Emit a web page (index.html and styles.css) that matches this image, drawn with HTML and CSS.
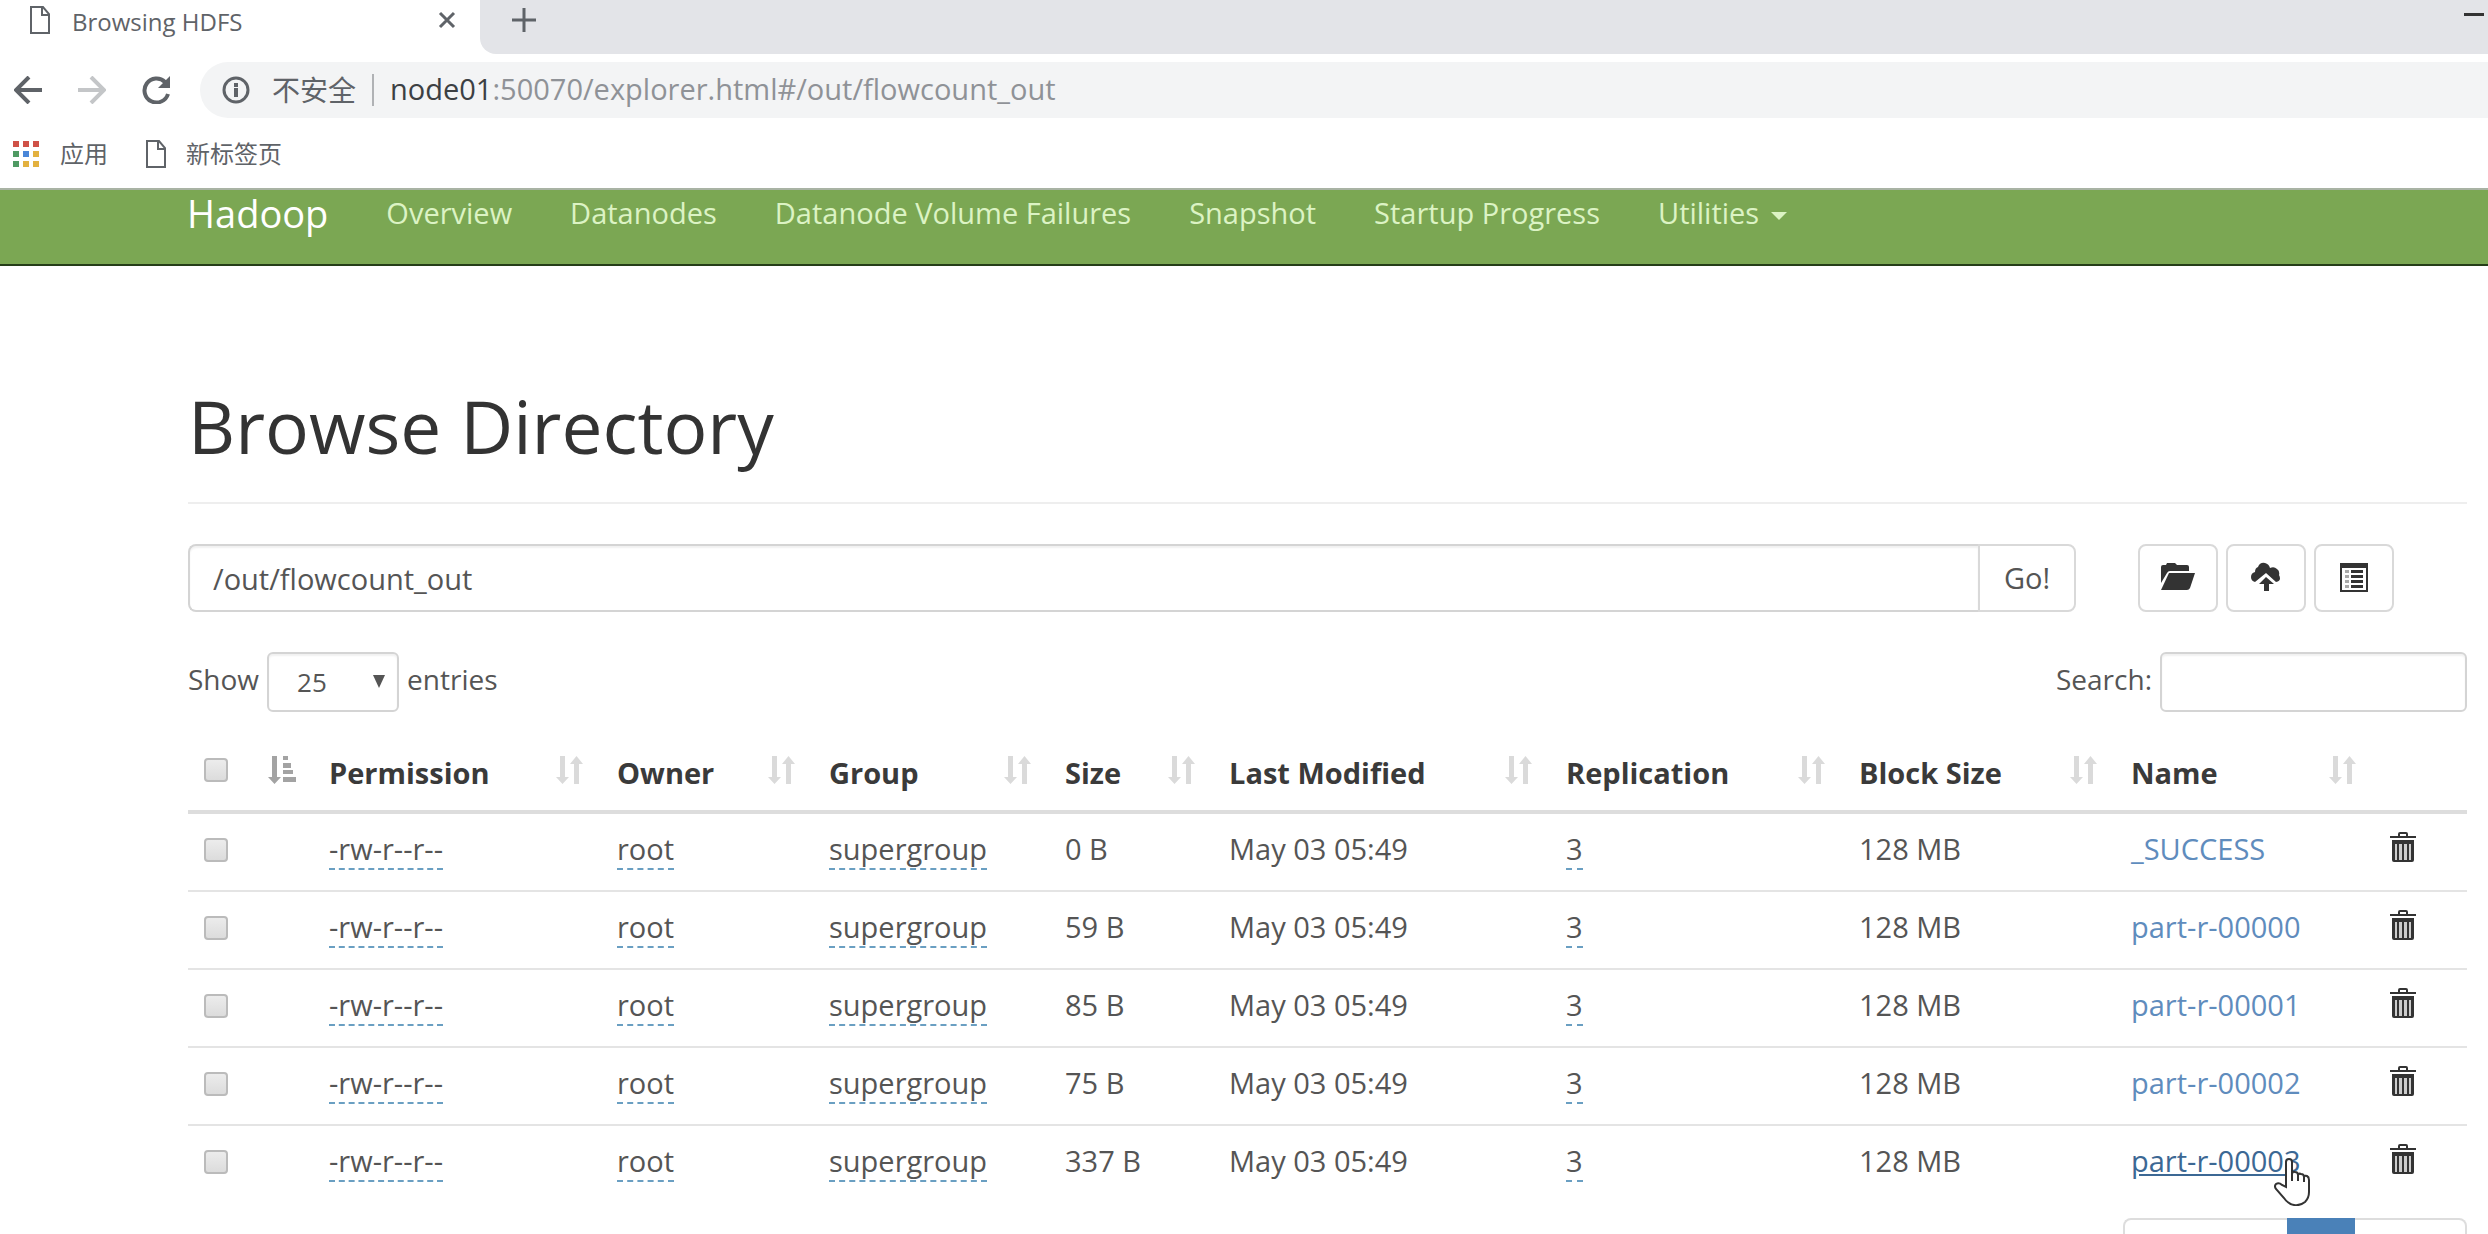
FILE: index.html
```html
<!DOCTYPE html>
<html lang="en">
<head>
  <meta charset="UTF-8">
  <title>Browsing HDFS</title>
  <link rel="stylesheet" href="styles.css">
</head>
<body>
  <!-- shared icons -->
  <svg class="sprite" aria-hidden="true">
    <symbol id="icon-page" viewBox="0 0 20 28">
      <path d="M1 1h12l6 7v19H1z M12 1v8h7" fill="none" stroke="currentColor" stroke-width="2"/>
    </symbol>
    <symbol id="icon-sort" viewBox="0 0 28 28">
      <path d="M4 0h5v21h4l-6.500 7L0 21h4z M18 28V8h-4L20.500 0 27 8h-4v20z" fill="currentColor"/>
    </symbol>
    <symbol id="icon-sort-asc" viewBox="0 0 28 28">
      <path d="M4 0h5v21h4l-6.500 7L0 21h4z M15 0h5v4h-5z M15 7h8v5h-8z M15 14h10v4h-10z M15 21h13v5h-13z" fill="currentColor"/>
    </symbol>
    <symbol id="icon-trash" viewBox="0 0 26 31">
      <path d="M8 4V2q0-2 2-2h6q2 0 2 2v2h8v2H0V4z M10 4h6V2h-6z M2 8h22v20q0 2-2 2H4q-2 0-2-2z" fill="#333" fill-rule="evenodd"/>
      <path d="M5 12h2v16H5z M9 12h3v16H9z M14 12h3v16h-3z M19 12h2v16h-2z" fill="#ccc"/>
    </symbol>
  </svg>

  <div class="browser">
    <div class="tab-strip">
      <div class="tab">
        <svg class="page-icon"><use href="#icon-page"/></svg>
        <span class="tab-title">Browsing HDFS</span>
        <button class="tab-close" aria-label="Close tab">
          <svg width="18" height="18" viewBox="0 0 18 18"><path d="M2 2l14 14M16 2L2 16" stroke="#5f6368" stroke-width="3"/></svg>
        </button>
      </div>
      <div class="tab-rest">
        <button aria-label="New tab">
          <svg width="24" height="24" viewBox="0 0 24 24"><path d="M12 0v24M0 12h24" stroke="#5f6368" stroke-width="3"/></svg>
        </button>
        <button aria-label="Minimize">
          <svg width="20" height="4" viewBox="0 0 20 4"><path d="M0 0h20v3H0z" fill="#333"/></svg>
        </button>
      </div>
    </div>

    <div class="toolbar">
      <button aria-label="Back">
        <svg width="28" height="28" viewBox="0 0 28 28"><path d="M28 14H3M15 1L2 14l13 13" fill="none" stroke="#5f6368" stroke-width="4"/></svg>
      </button>
      <button aria-label="Forward">
        <svg width="28" height="28" viewBox="0 0 28 28"><path d="M0 14h25M13 1l13 13-13 13" fill="none" stroke="#c4c6c8" stroke-width="4"/></svg>
      </button>
      <button aria-label="Reload">
        <svg width="28" height="28" viewBox="0 0 28 28"><path d="M23 6A12 12 0 1 0 26 18" fill="none" stroke="#5f6368" stroke-width="4"/><path d="M28 0v12H16z" fill="#5f6368"/></svg>
      </button>
      <div class="address">
        <svg width="28" height="28" viewBox="0 0 28 28"><circle cx="14" cy="14" r="12" fill="none" stroke="#5f6368" stroke-width="3"/><path d="M12 7h4v4h-4z M12 12h4v9h-4z" fill="#5f6368"/></svg>
        <span class="insecure">不安全</span>
        <span class="url"><b>node01</b>:50070/explorer.html#/out/flowcount_out</span>
      </div>
    </div>

    <div class="bookmarks">
      <a href="#apps">
        <svg width="27" height="27" viewBox="0 0 27 27">
          <path d="M0 0h6v6H0z M10 0h6v6h-6z M20 0h6v6h-6z" fill="#cf5147"/>
          <path d="M0 10h6v6H0z M0 20h6v6H0z" fill="#4f9a63"/>
          <path d="M10 10h6v6h-6z" fill="#4a86d8"/>
          <path d="M20 10h6v6h-6z M10 20h6v6h-6z M20 20h6v6h-6z" fill="#e3b13f"/>
        </svg>
        应用
      </a>
      <a href="#newtab"><svg class="page-icon"><use href="#icon-page"/></svg>新标签页</a>
    </div>
  </div>

  <nav class="navbar">
    <a class="brand" href="#hadoop">Hadoop</a>
    <a href="#overview">Overview</a>
    <a href="#datanodes">Datanodes</a>
    <a href="#failures">Datanode Volume Failures</a>
    <a href="#snapshot">Snapshot</a>
    <a href="#startup">Startup Progress</a>
    <a href="#utilities">Utilities <span class="caret"></span></a>
  </nav>

  <main class="container">
    <h1>Browse Directory</h1>

    <div class="path-row">
      <form class="path-form">
        <input type="text" value="/out/flowcount_out" aria-label="Directory">
        <button type="button">Go!</button>
      </form>
      <div class="actions">
        <button aria-label="Create directory">
          <svg width="36" height="28" viewBox="0 0 36 28"><path d="M1 20V4q0-2 2-2h3l1-2h8l2 2h10q2 0 2 2v4H10q-2 0-3 2z" fill="#333"/><path d="M9 10h26L30 25q-1 2-3 2H1z" fill="#333"/></svg>
        </button>
        <button aria-label="Upload files">
          <svg width="30" height="30" viewBox="0 0 30 30"><path d="M4 20q-4-1-4-5 0-4 4-5 0-4 3-5 2-5 7-4 4 1 5 5 4-2 7 1 3 2 2 6 3 6-3 7l-10-9z" fill="#333"/><path d="M15 15l8 7h-5v7h-5v-7H8z" fill="#333"/></svg>
        </button>
        <button aria-label="Cut and paste">
          <svg width="28" height="29" viewBox="0 0 28 29"><path d="M0 0h28v29H0z M2 5v22h24V5z" fill="#333" fill-rule="evenodd"/><path d="M5 7h4v3H5z M5 12h4v3H5z M5 17h4v3H5z M5 22h4v3H5z" fill="#aaa"/><path d="M11 7h12v3H11z M11 12h12v3H11z M11 17h12v3H11z M11 22h12v3H11z" fill="#333"/></svg>
        </button>
      </div>
    </div>

    <div class="filter-row">
      <label class="length">Show
        <span class="select-wrap">
          <select><option>10</option><option selected>25</option><option>50</option></select>
        </span>
        entries
      </label>
      <label class="search">Search: <input type="search"></label>
    </div>

    <table>
      <colgroup>
        <col class="c-check"><col class="c-perm"><col class="c-owner"><col class="c-group"><col class="c-size">
        <col class="c-date"><col class="c-repl"><col class="c-block"><col class="c-name"><col class="c-trash">
      </colgroup>
      <thead>
        <tr>
          <th><div class="head"><input type="checkbox" aria-label="Select all"><svg class="sort sorted"><use href="#icon-sort-asc"/></svg></div></th>
          <th><div class="head">Permission<svg class="sort"><use href="#icon-sort"/></svg></div></th>
          <th><div class="head">Owner<svg class="sort"><use href="#icon-sort"/></svg></div></th>
          <th><div class="head">Group<svg class="sort"><use href="#icon-sort"/></svg></div></th>
          <th><div class="head">Size<svg class="sort"><use href="#icon-sort"/></svg></div></th>
          <th><div class="head">Last Modified<svg class="sort"><use href="#icon-sort"/></svg></div></th>
          <th><div class="head">Replication<svg class="sort"><use href="#icon-sort"/></svg></div></th>
          <th><div class="head">Block Size<svg class="sort"><use href="#icon-sort"/></svg></div></th>
          <th><div class="head">Name<svg class="sort"><use href="#icon-sort"/></svg></div></th>
          <th></th>
        </tr>
      </thead>
      <tbody>
        <tr>
          <td><input type="checkbox" aria-label="Select _SUCCESS"></td>
          <td><span class="editable">-rw-r--r--</span></td>
          <td><span class="editable">root</span></td>
          <td><span class="editable">supergroup</span></td>
          <td>0 B</td>
          <td>May 03 05:49</td>
          <td><span class="editable">3</span></td>
          <td>128 MB</td>
          <td><a href="#_SUCCESS">_SUCCESS</a></td>
          <td><button class="trash" aria-label="Delete _SUCCESS"><svg><use href="#icon-trash"/></svg></button></td>
        </tr>
        <tr>
          <td><input type="checkbox" aria-label="Select part-r-00000"></td>
          <td><span class="editable">-rw-r--r--</span></td>
          <td><span class="editable">root</span></td>
          <td><span class="editable">supergroup</span></td>
          <td>59 B</td>
          <td>May 03 05:49</td>
          <td><span class="editable">3</span></td>
          <td>128 MB</td>
          <td><a href="#part-r-00000">part-r-00000</a></td>
          <td><button class="trash" aria-label="Delete part-r-00000"><svg><use href="#icon-trash"/></svg></button></td>
        </tr>
        <tr>
          <td><input type="checkbox" aria-label="Select part-r-00001"></td>
          <td><span class="editable">-rw-r--r--</span></td>
          <td><span class="editable">root</span></td>
          <td><span class="editable">supergroup</span></td>
          <td>85 B</td>
          <td>May 03 05:49</td>
          <td><span class="editable">3</span></td>
          <td>128 MB</td>
          <td><a href="#part-r-00001">part-r-00001</a></td>
          <td><button class="trash" aria-label="Delete part-r-00001"><svg><use href="#icon-trash"/></svg></button></td>
        </tr>
        <tr>
          <td><input type="checkbox" aria-label="Select part-r-00002"></td>
          <td><span class="editable">-rw-r--r--</span></td>
          <td><span class="editable">root</span></td>
          <td><span class="editable">supergroup</span></td>
          <td>75 B</td>
          <td>May 03 05:49</td>
          <td><span class="editable">3</span></td>
          <td>128 MB</td>
          <td><a href="#part-r-00002">part-r-00002</a></td>
          <td><button class="trash" aria-label="Delete part-r-00002"><svg><use href="#icon-trash"/></svg></button></td>
        </tr>
        <tr>
          <td><input type="checkbox" aria-label="Select part-r-00003"></td>
          <td><span class="editable">-rw-r--r--</span></td>
          <td><span class="editable">root</span></td>
          <td><span class="editable">supergroup</span></td>
          <td>337 B</td>
          <td>May 03 05:49</td>
          <td><span class="editable">3</span></td>
          <td>128 MB</td>
          <td>
            <a class="hovered" href="#part-r-00003">part-r-00003<svg class="pointer" viewBox="0 0 36 48"><path d="M12 29V4q0-3 3-3t3 3v12q1-3 3-2 3 0 3 3 1-2 3-1 3 0 3 3 1-2 3-1 2 1 2 4v12q0 6-4 10-5 4-11 3-6-1-10-7L2 31q-2-3 0-5 3-2 6 1z" fill="#fff" stroke="#333" stroke-width="2"/><path d="M18 15v8M24 16v7M30 18v6" stroke="#333" stroke-width="2"/></svg></a>
          </td>
          <td><button class="trash" aria-label="Delete part-r-00003"><svg><use href="#icon-trash"/></svg></button></td>
        </tr>
      </tbody>
    </table>

    <div class="pagination">
      <a class="previous" href="#prev" aria-label="Previous"></a>
      <a class="active" href="#1" aria-label="Page 1"></a>
      <a class="next" href="#next" aria-label="Next"></a>
    </div>
  </main>
</body>
</html>
```
FILE: styles.css
```css
* {
  box-sizing: border-box;
}

body {
  margin: 0;
  height: 100vh;
  overflow: hidden;
  font-family: "Open Sans", "Noto Sans CJK SC", sans-serif;
  font-size: 29px;
  line-height: 42px;
  color: #555;
  background: #fff;
}

button, input, select {
  font: inherit;
  color: inherit;
}

button {
  padding: 0;
  border: none;
  background: none;
}

a {
  color: #5f8cbd;
  text-decoration: none;
}

svg {
  flex: none;
}

.sprite {
  position: absolute;
  width: 0;
  height: 0;
}

/* browser window */
.browser {
  color: #5f6368;
  border-bottom: 2px solid #a9b3a4;
}

.tab-strip {
  display: flex;
  height: 54px;
  background: #fff;
}

.tab {
  display: flex;
  align-items: center;
  width: 480px;
  padding: 0 24px 14px 30px;
  font-size: 24px;
}

.page-icon {
  width: 20px;
  height: 28px;
  color: #5f6368;
}

.tab-title {
  flex: 1;
  margin-left: 22px;
  padding-top: 4px;
}

.tab-close svg, .tab-rest svg, .toolbar svg {
  display: block;
}

.tab-rest {
  flex: 1;
  display: flex;
  justify-content: space-between;
  align-items: flex-start;
  padding: 8px 4px 0 32px;
  background: #e3e4e8;
  border-bottom-left-radius: 16px;
}

.tab-rest button:last-child {
  padding-top: 5px;
}

.toolbar {
  display: flex;
  align-items: center;
  gap: 36px;
  padding: 8px 0 8px 14px;
}

.address {
  flex: 1;
  display: flex;
  align-items: center;
  height: 56px;
  margin-left: -6px;
  padding-left: 22px;
  background: #f3f4f5;
  border-radius: 28px 0 0 28px;
}

.insecure {
  margin-left: 22px;
  padding-right: 16px;
  font-size: 28px;
  line-height: 32px;
  border-right: 2px solid #b0b2b5;
}

.url {
  margin-left: 16px;
  padding-bottom: 2px;
  color: #8f9297;
}

.url b {
  font-weight: 400;
  color: #3c4043;
}

.bookmarks {
  display: flex;
  align-items: center;
  gap: 38px;
  height: 62px;
  padding: 0 13px 6px;
  font-size: 24px;
}

.bookmarks a {
  display: flex;
  align-items: center;
  gap: 20px;
  color: #5f6368;
}

/* navbar */
.navbar {
  display: flex;
  align-items: flex-start;
  gap: 58px;
  height: 76px;
  padding: 2px 0 0 187px;
  background: #7ba753;
  border-bottom: 2px solid #253d18;
}

.navbar a {
  color: #dcf3c4;
}

.navbar .brand {
  font-size: 38px;
  color: #fff;
}

.caret {
  display: inline-block;
  margin-left: 4px;
  border: 8px solid transparent;
  border-top-color: #dcf3c4;
  border-bottom: none;
  vertical-align: middle;
}

/* page */
.container {
  padding: 117px 21px 0 188px;
}

h1 {
  margin: 0 0 40px;
  padding-bottom: 33px;
  font-size: 73px;
  line-height: 86px;
  font-weight: 400;
  color: #333;
  border-bottom: 2px solid #eee;
}

.path-row {
  display: flex;
  gap: 62px;
  padding-right: 73px;
}

.path-form {
  flex: 1;
  display: flex;
}

.path-form input {
  flex: 1;
  min-width: 0;
  height: 68px;
  padding: 0 23px;
  border: 2px solid #d4d4d4;
  border-right: none;
  border-radius: 8px 0 0 8px;
  box-shadow: inset 0 2px 2px rgba(0, 0, 0, 0.06);
}

.path-form button {
  width: 98px;
  border: 2px solid #d9d9d9;
  border-radius: 0 8px 8px 0;
}

.actions {
  display: flex;
  gap: 8px;
}

.actions button {
  display: flex;
  justify-content: center;
  align-items: center;
  width: 80px;
  height: 68px;
  padding-bottom: 2px;
  border: 2px solid #d9d9d9;
  border-radius: 8px;
}

.filter-row {
  display: flex;
  justify-content: space-between;
  margin: 40px 0 22px;
}

.filter-row label {
  display: flex;
  gap: 8px;
  font-size: 28px;
  line-height: 54px;
}

.select-wrap {
  position: relative;
}

.select-wrap::after {
  content: "";
  position: absolute;
  top: 23px;
  right: 14px;
  border: 6px solid transparent;
  border-top: 13px solid #555;
  border-bottom: none;
}

.filter-row select, .filter-row input {
  display: block;
  height: 60px;
  font-size: 26px;
  background: #fff;
  border: 2px solid #d4d4d4;
  border-radius: 6px;
  box-shadow: inset 0 2px 2px rgba(0, 0, 0, 0.06);
  appearance: none;
}

.filter-row select {
  width: 132px;
  padding: 0 28px;
}

.filter-row input {
  width: 307px;
}

/* listing */
table {
  width: 100%;
  table-layout: fixed;
  border-spacing: 0;
}

.c-check { width: 124px; }
.c-perm { width: 288px; }
.c-owner { width: 212px; }
.c-group { width: 236px; }
.c-size { width: 164px; }
.c-date { width: 337px; }
.c-repl { width: 293px; }
.c-block { width: 272px; }
.c-name { width: 259px; }
.c-trash { width: 94px; }

th, td {
  padding: 14px 17px 20px;
  text-align: left;
  vertical-align: top;
  border-bottom: 2px solid #e4e4e4;
}

th {
  padding: 18px 16px 16px 17px;
  font-weight: 700;
  color: #3a3a3a;
  border-bottom: 4px solid #ddd;
}

tbody tr:last-child td {
  border-bottom: none;
}

.head {
  display: flex;
  justify-content: space-between;
}

.sort {
  width: 28px;
  height: 28px;
  margin-top: 4px;
  color: #dadada;
}

.sorted {
  color: #a3a3a3;
}

input[type="checkbox"] {
  display: block;
  width: 24px;
  height: 24px;
  margin: 6px 0 0 -1px;
  border: 2px solid #bbb;
  border-radius: 4px;
  background: linear-gradient(#ececec, #dcdcdc);
  appearance: none;
}

tbody input[type="checkbox"] {
  margin-top: 10px;
}

.editable {
  border-bottom: 2px dashed #6a9fc2;
}

.hovered {
  position: relative;
  color: #3c6894;
  text-decoration: underline;
}

.pointer {
  position: absolute;
  top: 17px;
  right: -10px;
  width: 36px;
  height: 48px;
}

.trash {
  display: block;
  margin-top: 4px;
}

.trash svg {
  display: block;
  width: 26px;
  height: 31px;
}

.pagination {
  display: flex;
  justify-content: flex-end;
  margin-top: 16px;
}

.pagination a {
  height: 72px;
  border: 2px solid #ddd;
}

.pagination .previous {
  width: 164px;
  border-right: none;
  border-radius: 8px 0 0 8px;
}

.pagination .next {
  width: 112px;
  border-left: none;
  border-radius: 0 8px 8px 0;
}

.pagination .active {
  width: 68px;
  background: #4a81b8;
  border-color: #4a81b8;
}
```
